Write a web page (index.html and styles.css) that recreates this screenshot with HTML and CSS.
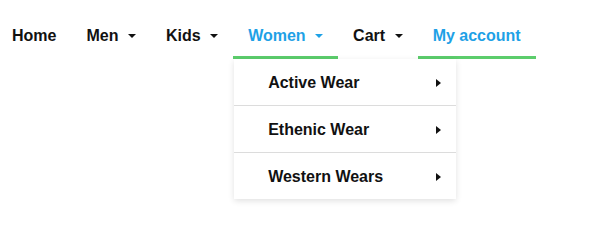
FILE: index.html
```html
<!DOCTYPE html>
<html>
<head>
<meta charset="utf-8">
<link rel="stylesheet" href="styles.css">
</head>
<body>
<nav class="nav">
  <div class="menu">
    <a class="menu-link" href="#">Home</a>
    <a class="menu-link has-caret" href="#">Men</a>
    <a class="menu-link has-caret" href="#">Kids</a>
    <a class="menu-link has-caret is-active" href="#">Women</a>
    <a class="menu-link has-caret" href="#">Cart</a>
    <a class="menu-link is-active" href="#">My account</a>
    <div class="submenu">
      <a class="submenu-link" href="#"><span>Active Wear</span><span class="sub-caret"></span></a>
      <a class="submenu-link" href="#"><span>Ethenic Wear</span><span class="sub-caret"></span></a>
      <a class="submenu-link" href="#"><span>Western Wears</span><span class="sub-caret"></span></a>
    </div>
  </div>
</nav>
</body>
</html>
```
FILE: styles.css
```css
* { box-sizing: border-box; }
html, body { margin: 0; padding: 0; background: #fff; }
body {
  font-family: "Liberation Sans", Arial, sans-serif;
  font-size: 16px;
  font-weight: bold;
  color: #111;
  min-height: 208px;
}
.menu {
  padding: 18px 0 0 0;
  display: grid;
  grid-template-columns: repeat(6, auto);
  justify-content: start;
  align-items: start;
}
.menu-link {
  grid-row: 1;
  display: flex;
  align-items: center;
  height: 41px;
  padding: 0 15px 3px 15px;
  color: #111;
  text-decoration: none;
  border-bottom: 3px solid transparent;
  line-height: 18px;
}
.menu-link:first-child { padding-left: 12px; }
.menu-link.has-caret::after {
  content: "";
  display: inline-block;
  margin-left: 9.5px;
  border-left: 4px solid transparent;
  border-right: 4px solid transparent;
  border-top: 4px solid currentColor;
}
.menu-link.is-active {
  color: #1ea1e6;
  border-bottom-color: #5ccd6c;
}
.submenu {
  grid-row: 2;
  grid-column: 4 / -1;
  justify-self: start;
  width: 222px;
  margin-left: 1px;
  display: flex;
  flex-direction: column;
  background: #fff;
  box-shadow: 0 2px 6px rgba(0,0,0,0.12);
}
.submenu-link {
  display: flex;
  align-items: center;
  justify-content: space-between;
  height: 47px;
  padding: 1px 15px 0 34px;
  color: #111;
  text-decoration: none;
  border-bottom: 1px solid #dcdcdc;
}
.submenu-link:last-child { border-bottom: none; height: 46px; }
.sub-caret {
  display: inline-block;
  width: 0;
  height: 0;
  border-top: 4px solid transparent;
  border-bottom: 4px solid transparent;
  border-left: 5px solid currentColor;
}
```
